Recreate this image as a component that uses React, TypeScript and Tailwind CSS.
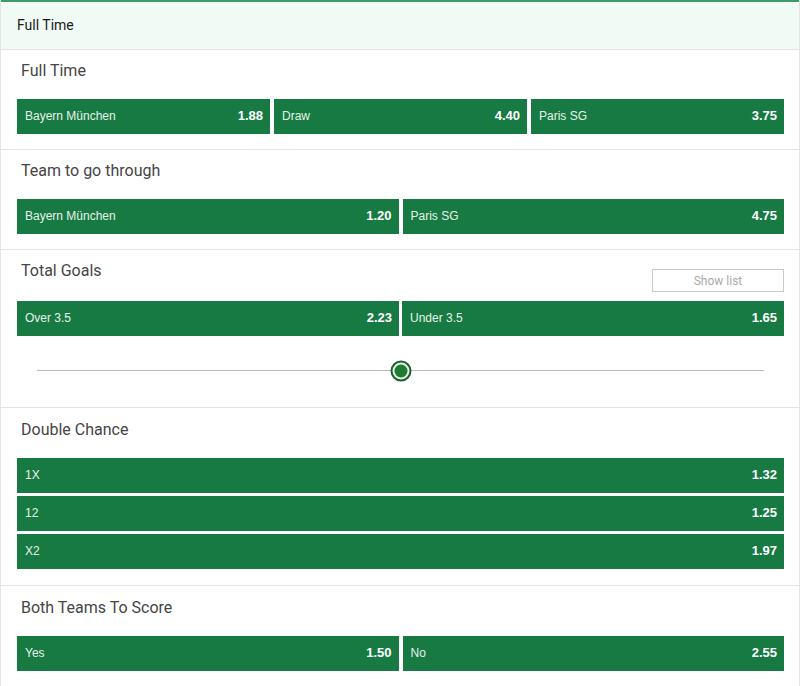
import React from "react";

type Sel = { label: string; odds: string };

const btnClass =
  "flex h-[35px] items-center justify-between bg-[#177a43] pb-[2px] pl-[8px] pr-[7px] text-white";

function OddsButton({ sel, grow = true }: { sel: Sel; grow?: boolean }) {
  return (
    <button className={grow ? btnClass + " flex-1" : btnClass + " shrink-0"}>
      <span className="font-['Liberation_Sans',Arial,sans-serif] text-[12px] text-[#e6f3ea]">
        {sel.label}
      </span>
      <span className="font-['Liberation_Sans',Arial,sans-serif] text-[13px] font-bold">
        {sel.odds}
      </span>
    </button>
  );
}

function Title({ children }: { children: React.ReactNode }) {
  return (
    <h3 className="pl-1 text-[16px] leading-6 text-[#454545]">{children}</h3>
  );
}

function Market({ title, rows }: { title: string; rows: Sel[] }) {
  return (
    <section className="border-b border-[#e4e4e4] pt-[9px] pr-[15px] pb-[15px] pl-[16px]">
      <Title>{title}</Title>
      <div className="mt-[16px] flex gap-[4px]">
        {rows.map((s) => (
          <OddsButton key={s.label} sel={s} />
        ))}
      </div>
    </section>
  );
}

export default function App() {
  return (
    <div className="w-[800px] border-x border-[#e4e4e4] bg-white font-['Roboto',sans-serif]">
      <div className="flex h-[50px] items-center border-t-2 border-b border-t-[#3f9a6a] border-b-[#e4e4e4] bg-[#f1fbf6] pl-[16px] text-[14px] text-[#1a1a1a]">
        Full Time
      </div>

      <Market
        title="Full Time"
        rows={[
          { label: "Bayern München", odds: "1.88" },
          { label: "Draw", odds: "4.40" },
          { label: "Paris SG", odds: "3.75" },
        ]}
      />
      <Market
        title="Team to go through"
        rows={[
          { label: "Bayern München", odds: "1.20" },
          { label: "Paris SG", odds: "4.75" },
        ]}
      />

      <section className="border-b border-[#e4e4e4] pt-[9px] pr-[15px] pl-[16px]">
        <div className="flex h-[33px] items-start justify-between">
          <Title>Total Goals</Title>
          <button className="mt-[10px] h-[23px] w-[132px] border border-[#c8c8c8] text-[12px] text-[#aaa]">
            Show list
          </button>
        </div>
        <div className="mt-[9px] flex gap-[3px]">
          <OddsButton sel={{ label: "Over 3.5", odds: "2.23" }} />
          <OddsButton sel={{ label: "Under 3.5", odds: "1.65" }} />
        </div>
        <div className="flex h-[71px] items-center px-5 pb-[2px]">
          <div className="relative h-px flex-1 bg-[#b8b8b8]">
            <div className="absolute top-1/2 left-1/2 flex h-[21px] w-[21px] -translate-x-1/2 -translate-y-1/2 items-center justify-center rounded-full border-2 border-[#1d5e30] bg-[#dff5e2]">
              <div className="h-[13px] w-[13px] rounded-full bg-[#1f7a33]" />
            </div>
          </div>
        </div>
      </section>

      <section className="border-b border-[#e4e4e4] pt-[10px] pr-[15px] pb-[16px] pl-[16px]">
        <Title>Double Chance</Title>
        <div className="mt-[16px] flex flex-col gap-[3px]">
          <OddsButton grow={false} sel={{ label: "1X", odds: "1.32" }} />
          <OddsButton grow={false} sel={{ label: "12", odds: "1.25" }} />
          <OddsButton grow={false} sel={{ label: "X2", odds: "1.97" }} />
        </div>
      </section>

      <section className="border-b border-[#e4e4e4] pt-[10px] pr-[15px] pb-[15px] pl-[16px]">
        <Title>Both Teams To Score</Title>
        <div className="mt-[16px] flex gap-[4px]">
          <OddsButton sel={{ label: "Yes", odds: "1.50" }} />
          <OddsButton sel={{ label: "No", odds: "2.55" }} />
        </div>
      </section>
    </div>
  );
}
